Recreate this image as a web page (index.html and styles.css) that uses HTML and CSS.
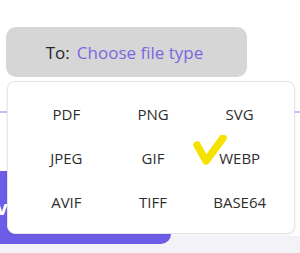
FILE: index.html
```html
<!DOCTYPE html>
<html lang="en">

<head>
    <meta charset="UTF-8">
    <meta name="viewport" content="width=device-width, initial-scale=1.0">
    <title>Convert file</title>
    <link rel="stylesheet" href="styles.css">
</head>

<body>
    <div class="page">
        <div class="top">
            <div class="picker">
                <span class="picker-label">To:</span>
                <span class="picker-value">Choose file type</span>
            </div>
            <div class="divider"></div>
            <button class="convert">Convert</button>
        </div>

        <div class="menu">
            <div class="item">PDF</div>
            <div class="item">PNG</div>
            <div class="item">SVG</div>
            <div class="item">JPEG</div>
            <div class="item">GIF</div>
            <div class="item">WEBP</div>
            <div class="item">AVIF</div>
            <div class="item">TIFF</div>
            <div class="item">BASE64</div>
        </div>

        <svg class="check" width="40" height="36" viewBox="0 0 40 36">
            <polyline points="5,10 14,26 31,3" fill="none" stroke="#f6e200" stroke-width="7.5"
                stroke-linecap="round" stroke-linejoin="round" />
        </svg>
    </div>
</body>

</html>
```

FILE: styles.css
```css
* {
    box-sizing: border-box;
}

body {
    margin: 0;
    background-color: #f3f3f7;
    font-family: "Open Sans", "Noto Sans", sans-serif;
    overflow: hidden;
}

.page {
    position: relative;
    height: 253px;
}

.top {
    background-color: #fff;
    height: 236px;
    padding-top: 27px;
}

.picker {
    margin-left: 6px;
    width: 241px;
    height: 50px;
    background-color: #d6d6d6;
    border-radius: 10px;
    display: flex;
    align-items: center;
    justify-content: center;
    gap: 7px;
    font-size: 17px;
    padding-right: 4px;
}

.picker-label {
    color: #262626;
}

.picker-value {
    color: #7a68e0;
}

.divider {
    margin-top: 34px;
    height: 2px;
    background-color: #c4bdf2;
}

.convert {
    display: block;
    margin-top: 58px;
    margin-left: -120px;
    width: 291px;
    height: 73px;
    border: none;
    border-radius: 10px;
    background-color: #6c5ce7;
    color: #fff;
    font-family: inherit;
    font-size: 20px;
    font-weight: bold;
    text-align: left;
    padding-left: 78px;
}

.menu {
    position: absolute;
    left: 7px;
    top: 81px;
    width: 288px;
    height: 153px;
    background-color: #fff;
    border: 1px solid #e6e6e6;
    border-radius: 8px;
    box-shadow: 0 1px 3px rgba(0, 0, 0, 0.08);
    display: grid;
    grid-template-columns: repeat(3, 1fr);
    grid-auto-rows: 44px;
    padding: 10px 11px 0 15px;
}

.item {
    display: flex;
    align-items: center;
    justify-content: center;
    font-size: 15px;
    color: #2e2e2e;
}

.check {
    position: absolute;
    left: 192px;
    top: 135px;
}
```
